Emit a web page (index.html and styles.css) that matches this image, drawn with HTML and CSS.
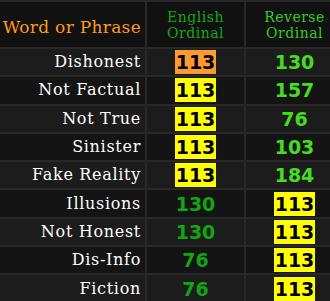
FILE: index.html
```html
<!DOCTYPE html>
<html>
<head>
<meta charset="utf-8">
<link rel="stylesheet" href="styles.css">
</head>
<body>
<div class="frame">
<table class="gem">
  <thead>
    <tr>
      <th class="word-head">Word or Phrase</th>
      <th class="eng-head">English<br>Ordinal</th>
      <th class="rev-head">Reverse<br>Ordinal</th>
    </tr>
  </thead>
  <tbody>
    <tr class="odd"><td class="word">Dishonest</td><td class="eng"><span class="hl orange">113</span></td><td class="rev">130</td></tr>
    <tr class="even"><td class="word">Not Factual</td><td class="eng"><span class="hl">113</span></td><td class="rev">157</td></tr>
    <tr class="odd"><td class="word">Not True</td><td class="eng"><span class="hl">113</span></td><td class="rev">76</td></tr>
    <tr class="even"><td class="word">Sinister</td><td class="eng"><span class="hl">113</span></td><td class="rev">103</td></tr>
    <tr class="odd"><td class="word">Fake Reality</td><td class="eng"><span class="hl">113</span></td><td class="rev">184</td></tr>
    <tr class="even"><td class="word">Illusions</td><td class="eng">130</td><td class="rev"><span class="hl">113</span></td></tr>
    <tr class="odd"><td class="word">Not Honest</td><td class="eng">130</td><td class="rev"><span class="hl">113</span></td></tr>
    <tr class="even"><td class="word">Dis-Info</td><td class="eng">76</td><td class="rev"><span class="hl">113</span></td></tr>
    <tr class="odd"><td class="word">Fiction</td><td class="eng">76</td><td class="rev"><span class="hl">113</span></td></tr>
  </tbody>
</table>
</div>
</body>
</html>
```
FILE: styles.css
```css
html, body {
  margin: 0;
  padding: 0;
  background: #282828;
}
.frame {
  width: 330px;
  height: 301px;
  overflow: hidden;
}
.gem {
  border-collapse: separate;
  border-spacing: 2px;
  margin-left: -2px;
  table-layout: fixed;
  width: 346px;
}
.gem th, .gem td {
  padding: 0;
  vertical-align: middle;
}
.gem th {
  background: #111111;
  height: 45px;
  font-family: "DejaVu Serif", serif;
  font-weight: normal;
}
.gem th.word-head {
  width: 141px;
  height: 41px;
  color: #ff9a1a;
  font-size: 17px;
  line-height: 20px;
  letter-spacing: 0.3px;
  text-align: right;
  padding: 4px 4px 0 0;
}
.eng-head, .rev-head {
  width: 97px;
  font-size: 14px;
  letter-spacing: 0.5px;
  line-height: 16px;
  text-align: center;
}
.eng-head { color: #11aa11; }
.rev-head { color: #33cc22; }
.gem td {
  height: 26.3px;
  line-height: 20px;
}
.odd td { background: #1c1c1c; }
.even td { background: #141414; }
.word {
  color: #ffffff;
  font-family: "DejaVu Serif", serif;
  font-size: 16px;
  letter-spacing: 0.7px;
  text-align: right;
  padding-right: 4px !important;
}
.eng, .rev {
  font-family: "DejaVu Sans", sans-serif;
  font-weight: bold;
  font-size: 19px;
  text-align: center;
}
.eng { color: #11a611; }
.rev { color: #44dd22; }
.hl {
  display: inline-block;
  vertical-align: middle;
  background: #ffff00;
  color: #000000;
  padding: 0 1px;
  line-height: 24px;
}
.hl.orange { background: #ff9933; }
```
